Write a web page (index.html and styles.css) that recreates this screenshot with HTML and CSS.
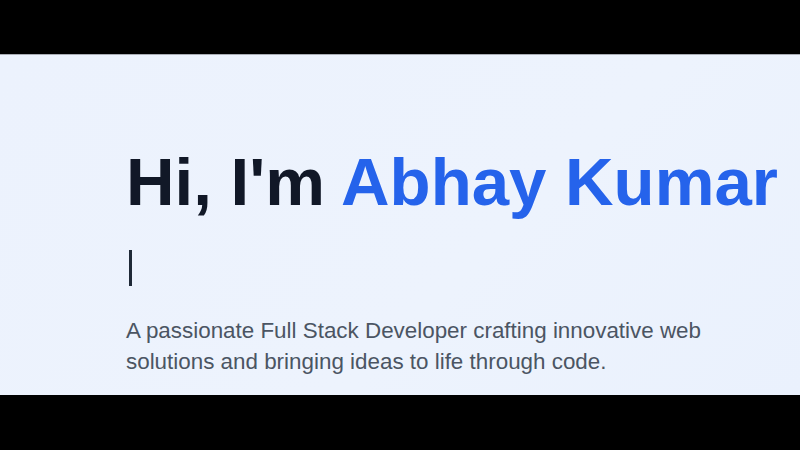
FILE: index.html
```html
<!DOCTYPE html>
<html lang="en">
<head>
<meta charset="utf-8">
<title>Abhay Kumar</title>
<link rel="stylesheet" href="styles.css">
</head>
<body>
<main class="screen">
  <section class="hero">
    <h1 class="hero-title">Hi, I'm <span class="accent">Abhay Kumar</span></h1>
    <div class="typing"><span class="cursor"></span></div>
    <p class="hero-text">A passionate Full Stack Developer crafting innovative web solutions and bringing ideas to life through code.</p>
  </section>
</main>
</body>
</html>
```
FILE: styles.css
```css
html, body {
  margin: 0;
  padding: 0;
  background: #000;
  height: 100%;
  overflow: hidden;
}
.screen {
  margin-top: 54px;
  height: 341px;
  box-sizing: border-box;
  border-top: 1px solid #a9adb5;
  background: linear-gradient(135deg, #ecf2fd 0%, #edf3fd 60%, #eaf1fd 100%);
  overflow: hidden;
}
.hero {
  padding-left: 126px;
  font-family: "Liberation Sans", Arial, sans-serif;
}
.hero-title {
  margin: 93px 0 0;
  font-size: 67.2px;
  line-height: 67px;
  font-weight: 700;
  color: #111827;
  white-space: nowrap;
}
.accent {
  color: #2563eb;
}
.typing {
  margin-top: 35px;
  height: 36px;
  display: flex;
}
.cursor {
  display: block;
  width: 3px;
  height: 36px;
  margin-left: 3px;
  background: #1f2937;
}
.hero-text {
  margin: 29px 0 0;
  max-width: 600px;
  font-size: 22.4px;
  line-height: 31px;
  color: #4b5563;
}
```
